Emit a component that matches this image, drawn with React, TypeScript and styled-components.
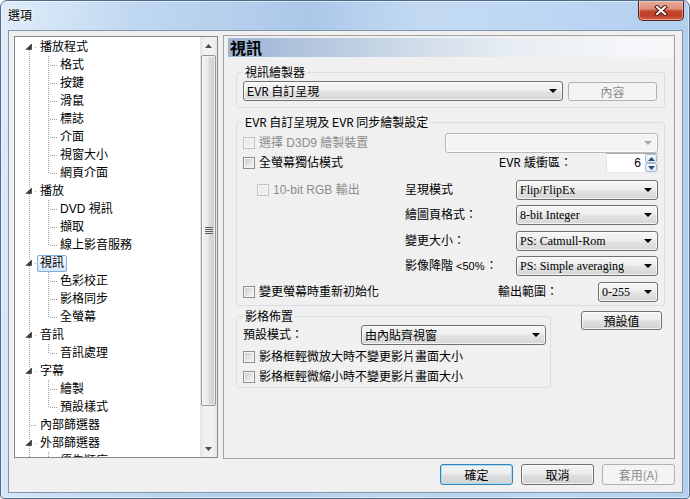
import React from "react";
import styled, { createGlobalStyle } from "styled-components";

const CJK = `"Noto Sans CJK TC", "Noto Sans CJK JP", sans-serif`;
const SANS = `"Liberation Sans", ${CJK}`;
const SERIF = `"Liberation Serif", ${CJK}`;

const GlobalStyle = createGlobalStyle`
  html, body { margin: 0; padding: 0; background: #ffffff; }
  body { font-family: ${SANS}; font-size: 12px; color: #000; }
  * { box-sizing: border-box; }
`;

/* ---------- window frame ---------- */
const Window = styled.div`
  width: 690px;
  height: 499px;
  border: 1px solid #4f6b8a;
  border-radius: 7px 7px 4px 4px;
  background:
    linear-gradient(100deg, rgba(255,255,255,0.35) 0%, rgba(255,255,255,0.05) 18%, rgba(255,255,255,0) 40%, rgba(255,255,255,0.18) 56%, rgba(255,255,255,0) 72%),
    linear-gradient(90deg, #cde1f6 0%, #bcd5ef 20%, #abc8e9 45%, #b6d1ef 60%, #bcd7f4 80%, #b2cfee 100%);
  box-shadow: inset 0 0 0 1px rgba(255,255,255,0.5);
  display: flex;
  flex-direction: column;
  overflow: hidden;
`;

const TitleBar = styled.div`
  height: 29px;
  flex: none;
  display: flex;
  align-items: flex-start;
  justify-content: space-between;
  padding: 0 5px 0 7px;
`;

const Title = styled.div`
  margin-top: 6px;
  font-family: ${CJK};
  font-size: 12px;
  line-height: 16px;
  color: #000;
  text-shadow: 0 0 5px #ffffff, 0 0 3px #ffffff;
`;

const CloseButton = styled.div`
  width: 46px;
  height: 20px;
  border: 1px solid #5e2419;
  border-top: none;
  border-radius: 0 0 5px 5px;
  background: linear-gradient(#e9aa9a 0%, #dc8e7b 42%, #c6492f 52%, #bf3d26 78%, #d66a50 100%);
  box-shadow: inset 0 0 0 1px rgba(255,255,255,0.35);
  display: flex;
  align-items: center;
  justify-content: center;
`;

const Client = styled.div`
  margin: 0 6px 0 7px;
  height: 463px;
  flex: none;
  background: #f0f0f0;
  border: 1px solid #8496ab;
  padding: 4px 7px 0 5px;
  display: flex;
  flex-direction: column;
`;

const Panes = styled.div`
  display: flex;
  align-items: flex-start;
  gap: 5px;
`;

/* ---------- tree ---------- */
const TreePanel = styled.div`
  width: 204px;
  height: 422px;
  margin-top: 1px;
  border: 1px solid #828790;
  background: #ffffff;
  display: flex;
  overflow: hidden;
`;

const TreeList = styled.div`
  flex: 1;
  padding-top: 1px;
  overflow: hidden;
`;

const TreeRow = styled.div`
  height: 18px;
  display: flex;
  align-items: center;
  white-space: nowrap;
`;

const TreeLabel = styled.span<{ $selected?: boolean }>`
  height: 17px;
  line-height: 15px;
  padding: 0 2px;
  border: 1px solid ${(p) => (p.$selected ? "#86aedd" : "transparent")};
  border-radius: 2px;
  background: ${(p) => (p.$selected ? "linear-gradient(#f3f8fe, #d7e7fb)" : "transparent")};
  font-family: ${SANS};
  font-size: 12px;
  color: #000;
`;

const ScrollBar = styled.div`
  width: 17px;
  flex: none;
  display: flex;
  flex-direction: column;
  background: linear-gradient(90deg, #e4e4e4 0%, #f1f1f1 25%, #f1f1f1 75%, #e6e6e6 100%);
`;

const ScrollArrow = styled.div`
  height: 17px;
  flex: none;
  display: flex;
  align-items: center;
  justify-content: center;
`;

const Thumb = styled.div`
  height: 351px;
  margin: 1px 1px 0 1px;
  border: 1px solid #979797;
  border-radius: 2px;
  background: linear-gradient(90deg, #f4f4f4 0%, #e9e9e9 45%, #dadada 55%, #d0d0d0 100%);
  box-shadow: inset 0 0 0 1px rgba(255,255,255,0.6);
  display: flex;
  align-items: center;
  justify-content: center;
`;

const Track = styled.div`
  flex: 1;
`;

/* ---------- page ---------- */
const Page = styled.section`
  width: 452px;
  height: 424px;
  border: 1px solid #a3a3a3;
  background: #f0f0f0;
  display: flex;
  flex-direction: column;
`;

const PageHeader = styled.div`
  margin: 2px 1px 0 4px;
  height: 19px;
  padding-left: 2px;
  background: linear-gradient(90deg, #9cb5d5 0%, #b7c9df 22%, #d3dfeb 45%, #e8eef4 65%, #f3f5f8 85%, #f6f7f9 100%);
  font-family: ${CJK};
  font-weight: bold;
  font-size: 16px;
  line-height: 19px;
  color: #000;
`;

const PageBody = styled.div`
  padding: 8px 9px 0 12px;
  display: flex;
  flex-direction: column;
`;

const Group = styled.fieldset<{ $pad: string; $mt?: number; $w?: number }>`
  margin: ${(p) => p.$mt ?? 0}px 0 0 0;
  min-width: 0;
  ${(p) => (p.$w ? `width: ${p.$w}px; flex: none;` : "")}
  border: 1px solid #d5dfe5;
  border-radius: 3px;
  padding: ${(p) => p.$pad};
`;

const Legend = styled.legend`
  height: 14px;
  padding: 0 2px;
  font-family: ${CJK};
  font-size: 12px;
  line-height: 14px;
  white-space: nowrap;
  color: #000;
`;

/* Latin part drawn in the fixed-pitch style of the dialog font */
const MonoLatin = styled.span`
  font-family: "Liberation Mono", monospace;
  font-size: 12px;
  line-height: 0;
`;

const Row = styled.div<{ $mt?: number; $h?: number }>`
  display: flex;
  align-items: center;
  height: ${(p) => p.$h ?? 20}px;
  margin-top: ${(p) => p.$mt ?? 0}px;
`;

const Cell = styled.div<{ $w: number }>`
  width: ${(p) => p.$w}px;
  flex: none;
  display: flex;
  align-items: center;
`;

const RightCluster = styled.div`
  margin-left: auto;
  display: flex;
  align-items: center;
`;

const FieldLabel = styled.span<{ $w?: number }>`
  ${(p) => (p.$w ? `width: ${p.$w}px; flex: none;` : "")}
  font-family: ${SANS};
  font-size: 12px;
  line-height: 16px;
  white-space: nowrap;
  color: #000;
`;

const SmallLatin = styled.span`
  font-family: "Liberation Sans", sans-serif;
  font-size: 11px;
  line-height: 0;
  margin: 0 1px 0 3px;
`;

const SelectBox = styled.div<{ $w: number; $disabled?: boolean; $font?: string; $auto?: boolean }>`
  width: ${(p) => p.$w}px;
  height: 20px;
  flex: none;
  ${(p) => (p.$auto ? "margin-left: auto;" : "")}
  display: flex;
  align-items: center;
  justify-content: space-between;
  padding: 0 5px 0 3px;
  border: 1px solid ${(p) => (p.$disabled ? "#b5b9bc" : "#707070")};
  border-radius: 3px;
  background: ${(p) =>
    p.$disabled
      ? "#f4f4f4"
      : "linear-gradient(#f6f6f6 0%, #eeeeee 45%, #e2e2e2 55%, #d6d6d6 100%)"};
  box-shadow: inset 0 0 0 1px rgba(255,255,255,0.7);
  font-family: ${(p) => p.$font ?? SERIF};
  font-size: 12px;
  line-height: 16px;
  white-space: nowrap;
  color: #000;
`;

const PushButton = styled.button<{ $w: number; $h?: number; $default?: boolean; $ml?: number; $mt?: number }>`
  width: ${(p) => p.$w}px;
  height: ${(p) => p.$h ?? 21}px;
  flex: none;
  margin: ${(p) => p.$mt ?? 0}px 0 0 ${(p) => p.$ml ?? 0}px;
  padding: 0;
  border: 1px solid ${(p) => (p.$default ? "#3c7fb1" : "#707070")};
  border-radius: 3px;
  background: linear-gradient(#f4f4f4 0%, #ececec 45%, #dedede 55%, #d2d2d2 100%);
  box-shadow: inset 0 0 0 1px ${(p) => (p.$default ? "#9fe0fb" : "rgba(255,255,255,0.75)")};
  font-family: ${CJK};
  font-size: 12px;
  line-height: 15px;
  color: #000;
  &:disabled {
    border-color: #adb2b5;
    background: #f4f4f4;
    box-shadow: none;
    color: #8b8b8b;
  }
`;

const CheckRow = styled.span<{ $disabled?: boolean; $indent?: number }>`
  display: flex;
  align-items: center;
  gap: 4px;
  margin-left: ${(p) => p.$indent ?? 0}px;
  font-family: ${SANS};
  font-size: 12px;
  line-height: 16px;
  white-space: nowrap;
  color: ${(p) => (p.$disabled ? "#8d8d8d" : "#000")};
`;

const CheckBoxMark = styled.span<{ $disabled?: boolean }>`
  width: 12px;
  height: 12px;
  flex: none;
  border: 1px solid ${(p) => (p.$disabled ? "#c2c2c2" : "#8e8f8f")};
  background: ${(p) =>
    p.$disabled
      ? "linear-gradient(135deg, #e6e6e6 0%, #f5f5f5 100%)"
      : "linear-gradient(135deg, #c3c7cd 0%, #e4e5e7 55%, #f7f7f7 100%)"};
  box-shadow: inset 0 0 0 1px #f6f6f6;
`;

const Spin = styled.div`
  width: 52px;
  height: 20px;
  flex: none;
  display: flex;
  border: 1px solid #abadb3;
  border-color: #abadb3 #dbdfe6 #e3e9ef #e2e3ea;
  background: #ffffff;
`;

const SpinValue = styled.div`
  flex: 1;
  text-align: right;
  padding-right: 4px;
  font-family: ${SANS};
  font-size: 12px;
  line-height: 18px;
`;

const SpinButtons = styled.div`
  width: 12px;
  display: flex;
  flex-direction: column;
`;

const SpinBtn = styled.div`
  flex: 1;
  border: 1px solid #a9bcd2;
  border-radius: 2px;
  background: linear-gradient(#f5f9fd, #dbe8f5);
  display: flex;
  align-items: center;
  justify-content: center;
`;

const BottomArea = styled.div`
  display: flex;
  align-items: flex-start;
  margin-top: 3px;
`;

const DialogButtons = styled.div`
  display: flex;
  justify-content: flex-end;
  gap: 8px;
  margin-top: 5px;
`;

/* ---------- drawings ---------- */
const CloseGlyph = () => (
  <svg width="14" height="11" viewBox="0 0 14 11">
    <path d="M3 2 L11 9 M11 2 L3 9" stroke="#4a1a12" strokeWidth="4" strokeLinecap="square" />
    <path d="M3 2 L11 9 M11 2 L3 9" stroke="#ffffff" strokeWidth="2" strokeLinecap="square" />
  </svg>
);

const DropArrow = ({ disabled }: { disabled?: boolean }) => (
  <svg width="8" height="4" viewBox="0 0 8 4">
    <polygon points="0,0 8,0 4,4" fill={disabled ? "#a6a6a6" : "#000"} />
  </svg>
);

const SmallArrow = ({ up, color = "#4d4d4d" }: { up?: boolean; color?: string }) => (
  <svg width="7" height="4" viewBox="0 0 7 4">
    <polygon points={up ? "0,4 7,4 3.5,0" : "0,0 7,0 3.5,4"} fill={color} />
  </svg>
);

const Gripper = () => (
  <svg width="8" height="8" viewBox="0 0 8 8">
    {[0.5, 2.5, 4.5, 6.5].map((y) => (
      <line key={y} x1="0" y1={y} x2="8" y2={y} stroke="#5f5f5f" strokeWidth="1" />
    ))}
  </svg>
);

type TreeNode = {
  label: string;
  kind: "root" | "child";
  toggle?: boolean;
  first?: boolean;
  last?: boolean;
  selected?: boolean;
};

const nodes: TreeNode[] = [
  { label: "播放程式", kind: "root", toggle: true, first: true },
  { label: "格式", kind: "child" },
  { label: "按鍵", kind: "child" },
  { label: "滑鼠", kind: "child" },
  { label: "標誌", kind: "child" },
  { label: "介面", kind: "child" },
  { label: "視窗大小", kind: "child" },
  { label: "網頁介面", kind: "child", last: true },
  { label: "播放", kind: "root", toggle: true },
  { label: "DVD 視訊", kind: "child" },
  { label: "擷取", kind: "child" },
  { label: "線上影音服務", kind: "child", last: true },
  { label: "視訊", kind: "root", toggle: true, selected: true },
  { label: "色彩校正", kind: "child" },
  { label: "影格同步", kind: "child" },
  { label: "全螢幕", kind: "child", last: true },
  { label: "音訊", kind: "root", toggle: true },
  { label: "音訊處理", kind: "child", last: true },
  { label: "字幕", kind: "root", toggle: true },
  { label: "繪製", kind: "child" },
  { label: "預設樣式", kind: "child", last: true },
  { label: "內部篩選器", kind: "root" },
  { label: "外部篩選器", kind: "root", toggle: true },
  { label: "優先順序", kind: "child", last: true },
];

const dot = {
  stroke: "#a0a0a0",
  strokeWidth: 1,
  strokeDasharray: "1 1",
  shapeRendering: "crispEdges" as const,
};

const TreeGuide = ({ node }: { node: TreeNode }) => {
  if (node.kind === "root") {
    return (
      <svg width="22" height="18" viewBox="0 0 22 18">
        {node.toggle ? (
          <>
            {!node.first && <line x1="14.5" y1="0" x2="14.5" y2="5" {...dot} />}
            <line x1="14.5" y1="12" x2="14.5" y2="18" {...dot} />
            <polygon points="16.5,6 16.5,11.5 11,11.5" fill="#3c3c3c" stroke="#262626" strokeWidth="0.6" />
            <rect x="20" y="9" width="1" height="1" fill="#a0a0a0" />
          </>
        ) : (
          <>
            <line x1="14.5" y1="0" x2="14.5" y2="18" {...dot} />
            <line x1="16" y1="9.5" x2="22" y2="9.5" {...dot} />
          </>
        )}
      </svg>
    );
  }
  return (
    <svg width="42" height="18" viewBox="0 0 42 18">
      <line x1="14.5" y1="0" x2="14.5" y2="18" {...dot} />
      <line x1="33.5" y1="0" x2="33.5" y2={node.last ? 10 : 18} {...dot} />
      <line x1="35" y1="9.5" x2="42" y2="9.5" {...dot} />
    </svg>
  );
};

const CheckItem = ({
  children,
  disabled,
  indent,
}: {
  children: React.ReactNode;
  disabled?: boolean;
  indent?: number;
}) => (
  <CheckRow $disabled={disabled} $indent={indent}>
    <CheckBoxMark $disabled={disabled} />
    <span>{children}</span>
  </CheckRow>
);

const Select = ({
  w,
  value,
  disabled,
  font,
  auto,
}: {
  w: number;
  value?: React.ReactNode;
  disabled?: boolean;
  font?: string;
  auto?: boolean;
}) => (
  <SelectBox $w={w} $disabled={disabled} $font={font} $auto={auto}>
    <span>{value ?? ""}</span>
    <DropArrow disabled={disabled} />
  </SelectBox>
);

export default function App() {
  return (
    <>
      <GlobalStyle />
      <Window>
        <TitleBar>
          <Title>選項</Title>
          <CloseButton>
            <CloseGlyph />
          </CloseButton>
        </TitleBar>
        <Client>
          <Panes>
            <TreePanel>
              <TreeList>
                {nodes.map((n) => (
                  <TreeRow key={n.label}>
                    <TreeGuide node={n} />
                    <TreeLabel $selected={n.selected}>{n.label}</TreeLabel>
                  </TreeRow>
                ))}
              </TreeList>
              <ScrollBar>
                <ScrollArrow>
                  <SmallArrow up />
                </ScrollArrow>
                <Thumb>
                  <Gripper />
                </Thumb>
                <Track />
                <ScrollArrow>
                  <SmallArrow />
                </ScrollArrow>
              </ScrollBar>
            </TreePanel>

            <Page>
              <PageHeader>視訊</PageHeader>
              <PageBody>
                <Group $pad="2px 6px 6px 6px">
                  <Legend>視訊繪製器</Legend>
                  <Row>
                    <Select
                      w={320}
                      font={CJK}
                      value={
                        <>
                          <MonoLatin>EVR</MonoLatin> 自訂呈現
                        </>
                      }
                    />
                    <PushButton $w={89} $h={19} $ml={5} disabled>
                      內容
                    </PushButton>
                  </Row>
                </Group>

                <Group $mt={7} $pad="4px 6px 3px 6px">
                  <Legend>
                    <MonoLatin>EVR</MonoLatin> 自訂呈現及 <MonoLatin>EVR</MonoLatin> 同步繪製設定
                  </Legend>
                  <Row>
                    <CheckItem disabled>選擇 D3D9 繪製裝置</CheckItem>
                    <Select w={213} disabled auto />
                  </Row>
                  <Row>
                    <CheckItem>全螢幕獨佔模式</CheckItem>
                    <RightCluster>
                      <FieldLabel $w={107}>
                        <MonoLatin>EVR</MonoLatin> 緩衝區：
                      </FieldLabel>
                      <Spin>
                        <SpinValue>6</SpinValue>
                        <SpinButtons>
                          <SpinBtn>
                            <SmallArrow up color="#2c4c78" />
                          </SpinBtn>
                          <SpinBtn>
                            <SmallArrow color="#2c4c78" />
                          </SpinBtn>
                        </SpinButtons>
                      </Spin>
                    </RightCluster>
                  </Row>
                  <Row $mt={7}>
                    <Cell $w={162}>
                      <CheckItem disabled indent={14}>
                        10-bit RGB 輸出
                      </CheckItem>
                    </Cell>
                    <FieldLabel $w={110}>呈現模式</FieldLabel>
                    <Select w={142} value="Flip/FlipEx" auto />
                  </Row>
                  <Row $mt={5}>
                    <Cell $w={162} />
                    <FieldLabel $w={110}>繪圖頁格式：</FieldLabel>
                    <Select w={142} value="8-bit Integer" auto />
                  </Row>
                  <Row $mt={6}>
                    <Cell $w={162} />
                    <FieldLabel $w={110}>變更大小：</FieldLabel>
                    <Select w={142} value="PS: Catmull-Rom" auto />
                  </Row>
                  <Row $mt={5}>
                    <Cell $w={162} />
                    <FieldLabel $w={110}>
                      影像降階<SmallLatin>&lt;50%</SmallLatin>：
                    </FieldLabel>
                    <Select w={142} value="PS: Simple averaging" auto />
                  </Row>
                  <Row $mt={6}>
                    <CheckItem>變更螢幕時重新初始化</CheckItem>
                    <RightCluster>
                      <FieldLabel $w={100}>輸出範圍：</FieldLabel>
                      <Select w={60} value="0-255" />
                    </RightCluster>
                  </Row>
                </Group>

                <BottomArea>
                  <Group $w={315} $pad="2px 4px 1px 6px">
                    <Legend>影格佈置</Legend>
                    <Row>
                      <FieldLabel>預設模式：</FieldLabel>
                      <Select w={185} value="由內貼齊視窗" font={CJK} auto />
                    </Row>
                    <Row $h={18} $mt={3}>
                      <CheckItem>影格框輕微放大時不變更影片畫面大小</CheckItem>
                    </Row>
                    <Row $h={18} $mt={2}>
                      <CheckItem>影格框輕微縮小時不變更影片畫面大小</CheckItem>
                    </Row>
                  </Group>
                  <PushButton $w={81} $h={19} $ml={30} $mt={2}>
                    預設值
                  </PushButton>
                </BottomArea>
              </PageBody>
            </Page>
          </Panes>

          <DialogButtons>
            <PushButton $w={73} $default>
              確定
            </PushButton>
            <PushButton $w={73}>取消</PushButton>
            <PushButton $w={73} disabled>
              套用(A)
            </PushButton>
          </DialogButtons>
        </Client>
      </Window>
    </>
  );
}
